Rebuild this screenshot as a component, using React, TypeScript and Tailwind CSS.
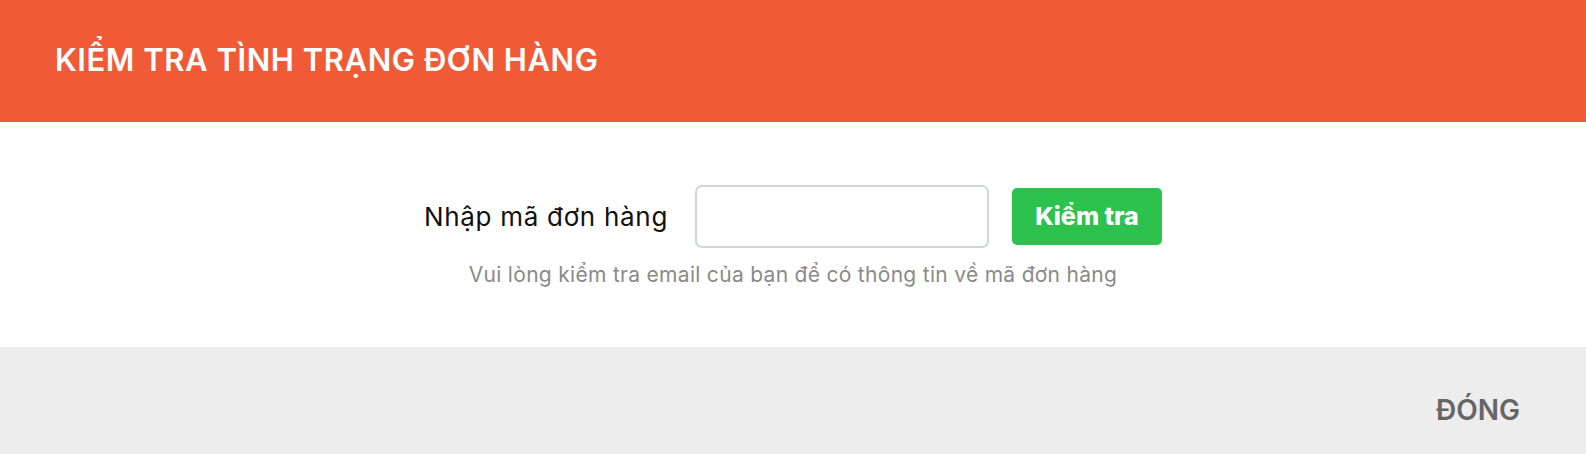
import React from "react";

export default function App() {
  return (
    <div className="w-[1586px] h-[454px] flex flex-col bg-white">
      <div className="h-[122px] bg-[#f15a36] flex items-center pl-[55px] pb-[4px]">
        <h1 className="text-white text-[31px] font-semibold tracking-[0.55px] font-['Inter',sans-serif] leading-none">
          KIỂM TRA TÌNH TRẠNG ĐƠN HÀNG
        </h1>
      </div>
      <div className="h-[225px] flex flex-col items-center pt-[63px] font-['Inter',sans-serif]">
        <div className="flex items-center h-[63px]">
          <label className="text-[26px] tracking-[0.7px] text-[#111] mr-[27px] leading-none">Nhập mã đơn hàng</label>
          <input
            type="text"
            className="w-[294px] h-[63px] border-2 border-[#d2d5db] rounded-[7px] outline-none px-3 text-[20px]"
          />
          <button className="ml-[23px] w-[150px] h-[57px] bg-[#2dc14e] rounded-[5px] text-white font-extrabold text-[25px] leading-none">
            Kiểm tra
          </button>
        </div>
        <p className="mt-[15px] text-[21px] tracking-[0.3px] text-[#8a8a8a] leading-[24px]">
          Vui lòng kiểm tra email của bạn để có thông tin về mã đơn hàng
        </p>
      </div>
      <div className="flex-1 bg-[#ededed] flex justify-end items-start pt-[49px] pr-[66px] font-['Inter',sans-serif]">
        <button className="text-[28px] font-semibold text-[#666] leading-none">ĐÓNG</button>
      </div>
    </div>
  );
}
